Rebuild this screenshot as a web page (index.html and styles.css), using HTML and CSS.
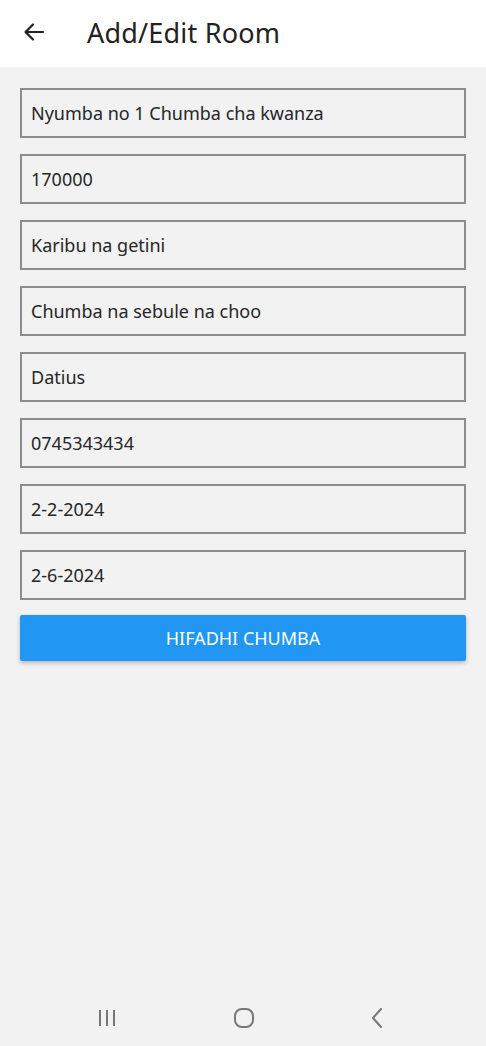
FILE: index.html
```html
<!DOCTYPE html>
<html lang="sw">
<head>
<meta charset="utf-8">
<title>Add/Edit Room</title>
<link rel="stylesheet" href="styles.css">
</head>
<body>
<div class="screen">
  <header class="appbar">
    <svg class="back" width="24" height="24" viewBox="0 0 24 24" aria-hidden="true">
      <path d="M21 12H4M11 4.5L3.5 12L11 19.5" fill="none" stroke="#222" stroke-width="2.2" stroke-linecap="round" stroke-linejoin="round"/>
    </svg>
    <h1 class="title">Add/Edit Room</h1>
  </header>
  <main class="form">
    <div class="field">Nyumba no 1 Chumba cha kwanza</div>
    <div class="field">170000</div>
    <div class="field">Karibu na getini</div>
    <div class="field">Chumba na sebule na choo</div>
    <div class="field">Datius</div>
    <div class="field">0745343434</div>
    <div class="field">2-2-2024</div>
    <div class="field">2-6-2024</div>
    <button class="save">HIFADHI CHUMBA</button>
  </main>
  <nav class="navbar">
    <svg width="20" height="20" viewBox="0 0 20 20" aria-hidden="true">
      <path d="M3 2v16M10 2v16M17 2v16" stroke="#777" stroke-width="2" fill="none"/>
    </svg>
    <svg width="22" height="22" viewBox="0 0 22 22" aria-hidden="true">
      <rect x="2" y="2" width="18" height="18" rx="7" fill="none" stroke="#777" stroke-width="2"/>
    </svg>
    <svg width="14" height="22" viewBox="0 0 14 22" aria-hidden="true">
      <path d="M11 2L3 11L11 20" fill="none" stroke="#777" stroke-width="2" stroke-linecap="round" stroke-linejoin="round"/>
    </svg>
  </nav>
</div>
</body>
</html>
```
FILE: styles.css
```css
html, body {
  margin: 0;
  padding: 0;
  background: #f2f2f2;
}
.screen {
  display: flex;
  flex-direction: column;
  min-height: 1046px;
  font-family: "Noto Sans", "Open Sans", sans-serif;
  color: #222;
}
.appbar {
  height: 67px;
  background: #fff;
  display: flex;
  align-items: center;
  padding: 0 0 3px 22px;
  box-sizing: border-box;
}
.back {
  display: block;
}
.title {
  margin: 0 0 0 41px;
  font-size: 27px;
  font-weight: 400;
  color: #222;
  letter-spacing: 0.2px;
}
.form {
  display: flex;
  flex-direction: column;
  gap: 16px;
  padding: 21px 20px 0;
}
.field {
  height: 50px;
  box-sizing: border-box;
  border: 2px solid #8c8c8c;
  display: flex;
  align-items: center;
  padding: 0 9px;
  font-size: 18px;
  color: #262626;
  background: #f2f2f2;
}
.save {
  margin-top: -1px;
  height: 46px;
  border: none;
  border-radius: 2px;
  background: #2196f3;
  color: #fff;
  font-family: "Noto Sans", "Open Sans", sans-serif;
  font-size: 18px;
  box-shadow: 0 2px 4px rgba(0,0,0,0.25);
}
.navbar {
  margin-top: auto;
  height: 60px;
  display: flex;
  align-items: center;
  justify-content: space-between;
  padding: 4px 102px 0 97px;
  box-sizing: border-box;
}
.navbar svg { display: block; }
```
